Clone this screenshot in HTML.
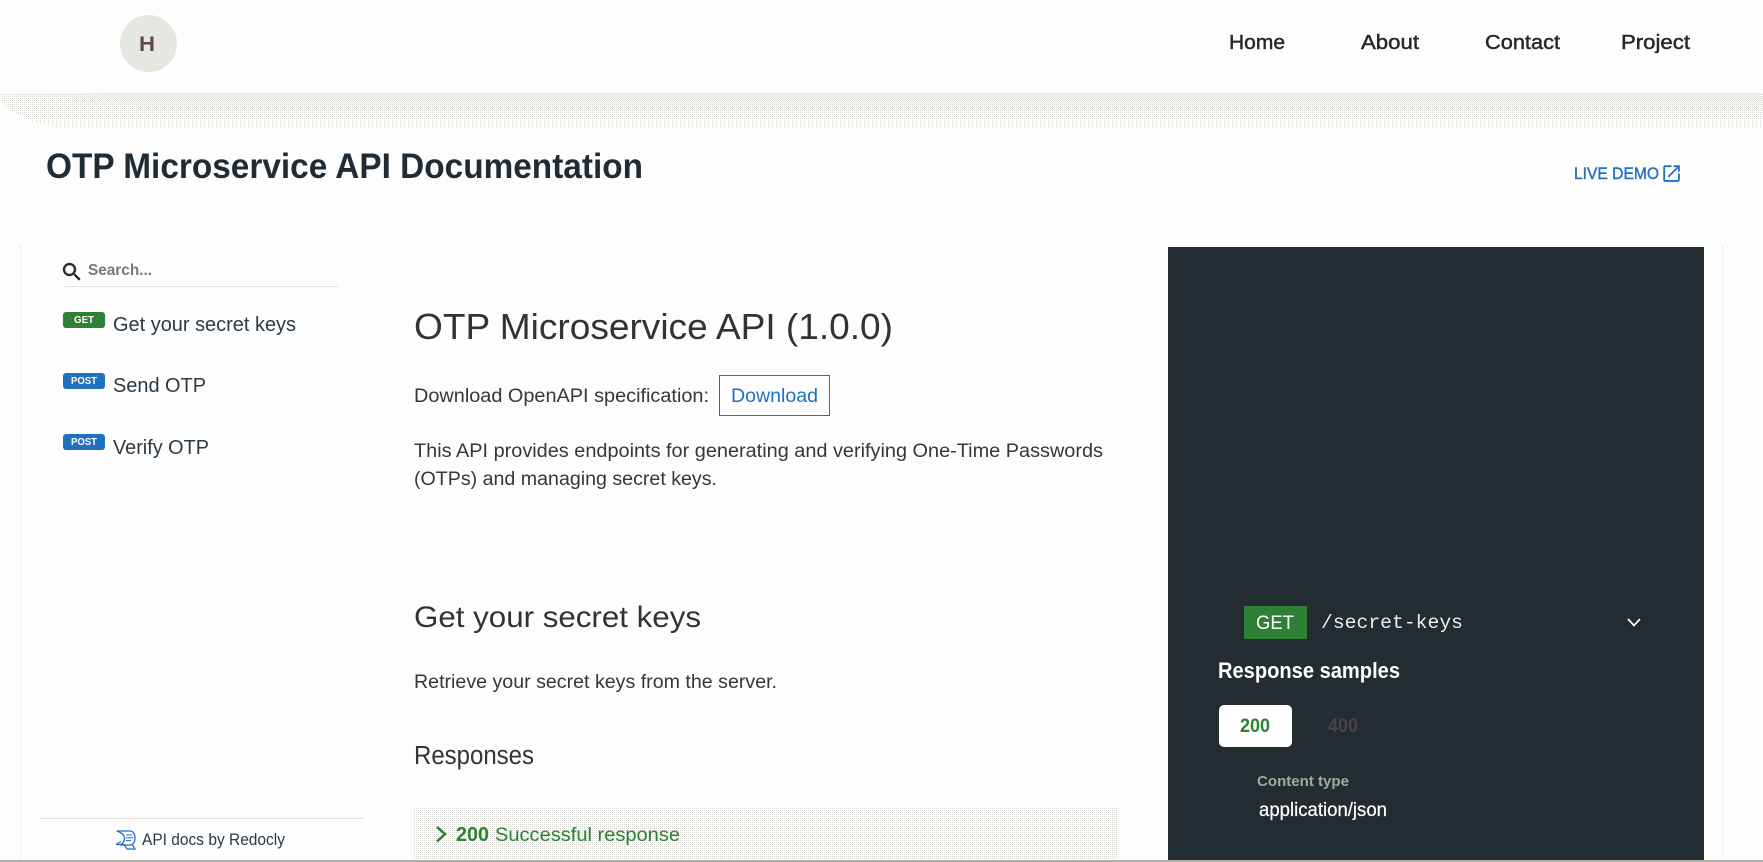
<!DOCTYPE html>
<html lang="en">
<head>
<meta charset="utf-8">
<title>OTP Microservice API Documentation</title>
<style>
html,body{margin:0;padding:0;width:1763px;height:862px;overflow:hidden;background:#fdfdfd}
.abs{position:absolute}
#logo{left:120px;top:15px;width:57px;height:57px;border-radius:50%;background:#e7e7e2}
#dl{left:20px;top:246px;width:0;height:614px;border-left:1px dotted #e2e2e2}
#dr{left:1722px;top:246px;width:0;height:614px;border-left:1px dotted #e2e2e2}
#panel{left:1168px;top:247px;width:536px;height:615px;background:#232c31}
#rule1{left:63px;top:286px;width:275px;height:1px;background:#e1e1da}
#rule2{left:39px;top:818px;width:325px;height:1px;background:#e1e1da}
.b{height:16px;width:42px;border-radius:3px}
#bget{left:63px;top:312px;background:#2e8036}
#bp1{left:63px;top:373px;background:#2171c1}
#bp2{left:63px;top:434px;background:#2171c1}
#dlbtn{left:719px;top:375px;width:109px;height:39px;border:1px solid #2171c1}
#mget{left:1244px;top:606px;width:63px;height:33px;background:#2e8036}
#tab{left:1219px;top:705px;width:73px;height:42px;background:#fff;border-radius:5px}
#bottom{left:0;top:860px;width:1763px;height:2px;background:#b0b0aa}
svg{position:absolute;left:0;top:0}
text{font-family:"Liberation Sans",Arial,sans-serif;white-space:pre}
</style>
</head>
<body>
<svg width="1763" height="862" viewBox="0 0 1763 862" xmlns="http://www.w3.org/2000/svg" style="z-index:0">
  <defs>
    <pattern id="chk" width="2" height="2" patternUnits="userSpaceOnUse">
      <rect x="1" y="1" width="1" height="1" fill="#d8d8d4"/>
    </pattern>
    <pattern id="dot" width="2" height="2" patternUnits="userSpaceOnUse">
      <rect width="1" height="1" fill="#d8d8d4"/>
    </pattern>
    <pattern id="sparse" width="4" height="2" patternUnits="userSpaceOnUse">
      <rect width="1" height="1" fill="#d8d8d4"/>
    </pattern>
    <clipPath id="bandclip"><path d="M0 93H1763V128H70C35 128 0 110 0 93z"/></clipPath>
    <linearGradient id="fadeV" x1="0" y1="0" x2="0" y2="1">
      <stop offset="0" stop-color="#fff"/><stop offset="1" stop-color="#000"/>
    </linearGradient>
    <linearGradient id="fadeH" x1="0" y1="0" x2="1" y2="0">
      <stop offset="0" stop-color="#000"/><stop offset="1" stop-color="#000" stop-opacity="0"/>
    </linearGradient>
    <mask id="chkmask" maskUnits="userSpaceOnUse" x="0" y="93" width="1763" height="24">
      <rect x="0" y="93" width="1763" height="24" fill="url(#fadeV)"/>
      <rect x="0" y="93" width="140" height="24" fill="url(#fadeH)"/>
    </mask>
  </defs>
  <g clip-path="url(#bandclip)">
    <rect x="0" y="93" width="1763" height="27" fill="url(#dot)"/>
    <rect x="0" y="120" width="1763" height="8" fill="url(#sparse)"/>
    <rect x="0" y="93" width="1763" height="24" fill="url(#chk)" mask="url(#chkmask)"/>
  </g>
  <rect x="414" y="807" width="703" height="53" fill="url(#dot)"/>
</svg>
<div class="abs" id="logo"></div>
<div class="abs" id="dl"></div>
<div class="abs" id="dr"></div>
<div class="abs" id="panel"></div>
<div class="abs" id="rule1"></div>
<div class="abs" id="rule2"></div>
<div class="abs b" id="bget"></div>
<div class="abs b" id="bp1"></div>
<div class="abs b" id="bp2"></div>
<div class="abs" id="dlbtn"></div>
<div class="abs" id="mget"></div>
<div class="abs" id="tab"></div>
<div class="abs" id="bottom"></div>

<svg width="1763" height="862" viewBox="0 0 1763 862" xmlns="http://www.w3.org/2000/svg">
  <!-- header -->
  <text x="139" y="51" font-size="21" font-weight="700" fill="#5b4a47" textLength="16" lengthAdjust="spacingAndGlyphs">H</text>
  <g fill="#23292c" stroke="#23292c" font-size="20">
    <text x="1229" y="49" stroke-width=".45" textLength="56" lengthAdjust="spacingAndGlyphs">Home</text>
    <text x="1361" y="49" stroke-width=".45" textLength="58" lengthAdjust="spacingAndGlyphs">About</text>
    <text x="1485" y="49" stroke-width=".45" textLength="75" lengthAdjust="spacingAndGlyphs">Contact</text>
    <text x="1621" y="49" stroke-width=".45" textLength="69" lengthAdjust="spacingAndGlyphs">Project</text>
  </g>
  <!-- title -->
  <text x="46" y="178" font-size="35" font-weight="700" fill="#1f2c35" textLength="597" lengthAdjust="spacingAndGlyphs">OTP Microservice API Documentation</text>
  <text x="1574" y="179" font-size="16.500" fill="#2171c1" stroke="#2171c1" stroke-width=".4" textLength="85" lengthAdjust="spacingAndGlyphs">LIVE DEMO</text>
  <path transform="translate(1660.5,162.5) scale(.92)" fill="#2171c1" d="M19 19H5V5h7V3H5c-1.11 0-2 .9-2 2v14c0 1.1.89 2 2 2h14c1.1 0 2-.9 2-2v-7h-2v7zM14 3v2h3.59l-9.83 9.83 1.41 1.41L19 6.41V10h2V3h-7z"/>

  <!-- sidebar -->
  <path transform="translate(60,260)" fill="#23292c" stroke="#23292c" stroke-width=".4" d="M15.5 14h-.79l-.28-.27C15.41 12.59 16 11.11 16 9.5 16 5.91 13.09 3 9.5 3S3 5.91 3 9.5 5.91 16 9.5 16c1.61 0 3.09-.59 4.23-1.57l.27.28v.79l5 4.99L20.49 19l-4.99-5zm-6 0C7.01 14 5 11.99 5 9.5S7.01 5 9.5 5 14 7.01 14 9.5 11.99 14 9.5 14z"/>
  <text x="88" y="275" font-size="15.500" font-weight="700" fill="#7b7776" textLength="64" lengthAdjust="spacingAndGlyphs">Search...</text>

  <text x="74" y="323" font-size="10" font-weight="700" fill="#fff" textLength="20" lengthAdjust="spacingAndGlyphs">GET</text>
  <text x="71" y="384" font-size="10" font-weight="700" fill="#fff" textLength="26" lengthAdjust="spacingAndGlyphs">POST</text>
  <text x="71" y="445" font-size="10" font-weight="700" fill="#fff" textLength="26" lengthAdjust="spacingAndGlyphs">POST</text>

  <g font-size="20.500" fill="#2b3a44">
    <text x="113" y="331" textLength="183" lengthAdjust="spacingAndGlyphs">Get your secret keys</text>
    <text x="113" y="392" textLength="93" lengthAdjust="spacingAndGlyphs">Send OTP</text>
    <text x="113" y="454" textLength="96" lengthAdjust="spacingAndGlyphs">Verify OTP</text>
  </g>

  <!-- redocly -->
  <g fill="none" stroke="#2171c1" stroke-width="1.300">
    <path d="M116.500 831H130C133 831 135 834 135 838C135 842 133 845 130 845H120C123 843.500 124.500 841 124.500 838C124.500 835 121 832 116.500 831z"/>
    <path d="M126 835h6M126 837.800h7M126 840.500h5" stroke-width="1"/>
    <path d="M116 844.500L121 841.500M116 844.500H124L127 849H135L132.500 845"/>
  </g>
  <text x="142" y="845" font-size="16.500" fill="#2b3a44" textLength="143" lengthAdjust="spacingAndGlyphs">API docs by Redocly</text>

  <!-- main -->
  <text x="414" y="339" font-size="36.500" fill="#333" textLength="479" lengthAdjust="spacingAndGlyphs">OTP Microservice API (1.0.0)</text>
  <text x="414" y="402" font-size="19" fill="#3b3534" textLength="295" lengthAdjust="spacingAndGlyphs">Download OpenAPI specification:</text>
  <text x="731" y="402" font-size="19" fill="#2171c1" textLength="87" lengthAdjust="spacingAndGlyphs">Download</text>
  <text x="414" y="457" font-size="19" fill="#3b3534" textLength="689" lengthAdjust="spacingAndGlyphs">This API provides endpoints for generating and verifying One-Time Passwords</text>
  <text x="414" y="485" font-size="19" fill="#3b3534" textLength="303" lengthAdjust="spacingAndGlyphs">(OTPs) and managing secret keys.</text>

  <text x="414" y="627" font-size="30" fill="#333" textLength="287" lengthAdjust="spacingAndGlyphs">Get your secret keys</text>
  <text x="414" y="688" font-size="19" fill="#3b3534" textLength="363" lengthAdjust="spacingAndGlyphs">Retrieve your secret keys from the server.</text>
  <text x="414" y="764" font-size="25.500" fill="#333" textLength="120" lengthAdjust="spacingAndGlyphs">Responses</text>

  <path d="M437 827l8 7-8 7.500" fill="none" stroke="#2e8036" stroke-width="2.500"/>
  <text x="456" y="841" font-size="20" font-weight="700" fill="#2e8036" textLength="33" lengthAdjust="spacingAndGlyphs">200</text>
  <text x="495" y="841" font-size="19.500" fill="#2e8036" textLength="185" lengthAdjust="spacingAndGlyphs">Successful response</text>

  <!-- right panel -->
  <text x="1256" y="629" font-size="19.500" fill="#fff" textLength="38" lengthAdjust="spacingAndGlyphs">GET</text>
  <text x="1321" y="628" font-size="19.500" fill="#eee" style="font-family:'Liberation Mono',monospace" textLength="142" lengthAdjust="spacingAndGlyphs">/secret-keys</text>
  <path d="M1628 619l6 6.500 6-6.500" fill="none" stroke="#fff" stroke-width="1.700"/>
  <text x="1218" y="678" font-size="22.500" font-weight="700" fill="#fff" textLength="182" lengthAdjust="spacingAndGlyphs">Response samples</text>
  <text x="1240" y="732" font-size="19" font-weight="700" fill="#2e8036" textLength="30" lengthAdjust="spacingAndGlyphs">200</text>
  <text x="1328" y="732" font-size="19" font-weight="700" fill="#4b4343" textLength="30" lengthAdjust="spacingAndGlyphs">400</text>
  <text x="1257" y="786" font-size="15" font-weight="700" fill="#a8a7a0" textLength="92" lengthAdjust="spacingAndGlyphs">Content type</text>
  <text x="1259" y="816" font-size="19" fill="#fff" stroke="#fff" stroke-width=".2" textLength="128" lengthAdjust="spacingAndGlyphs">application/json</text>
</svg>
</body>
</html>
